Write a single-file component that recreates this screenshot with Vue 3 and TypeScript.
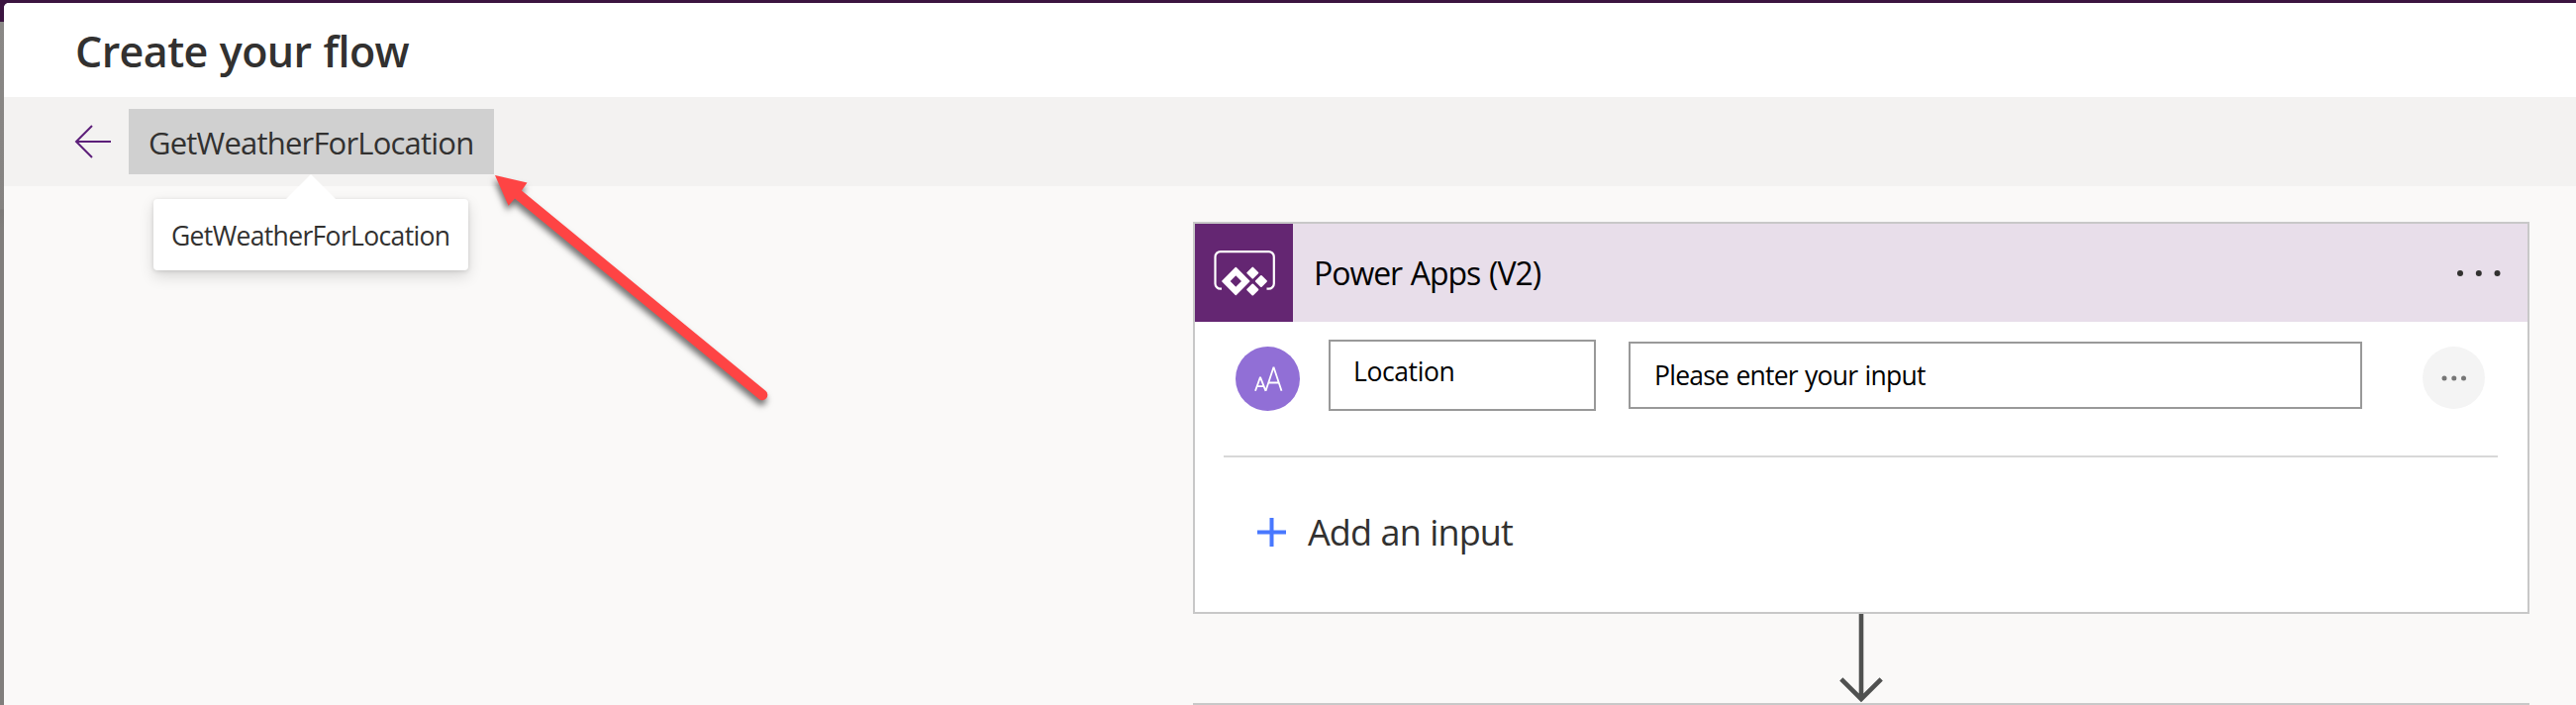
<script setup lang="ts">
const flowName = 'GetWeatherForLocation'
const headerDots = [3, 21.8, 40.5]
const rowDots = [3, 12.8, 22.5]
</script>

<template>
  <div class="backdrop">
    <main class="dialog">
      <header class="dialog-head"><h1>Create your flow</h1></header>
      <div class="toolbar">
        <svg class="back" width="38" height="36" viewBox="0 0 38 36">
          <path d="M37 18H2M18 2L2 18l16 16" fill="none" stroke="#5c1f7a" stroke-width="2" />
        </svg>
        <div class="name">
          <span class="name-text">{{ flowName }}</span>
          <div class="tooltip">
            <svg class="beak" width="52" height="26" viewBox="0 0 52 26"><path d="M0 26L26 0l26 26z" fill="#fff" /></svg>
            <span class="tip-text">{{ flowName }}</span>
          </div>
        </div>
      </div>
      <section class="canvas">
        <article class="card">
          <div class="card-head">
            <div class="app-icon">
              <svg width="99" height="99" viewBox="0 0 99 99">
                <path d="M27 65.7h-1.2a5.3 5.3 0 0 1-5.3-5.3V33.4a5.3 5.3 0 0 1 5.3-5.3h48.7a5.3 5.3 0 0 1 5.3 5.3v27a5.3 5.3 0 0 1-5.3 5.3h-2" fill="none" stroke="#fff" stroke-width="2.2" />
                <path d="M41.3 44.6L54.7 58 41.3 71.4 27.9 58zM41.3 51.3L34.6 58l6.7 6.7L48 58z" fill="#fff" fill-rule="evenodd" stroke="#fff" stroke-width="1.6" stroke-linejoin="round" />
                <path d="M58.3 44.6l5 5-5 5-5-5zM66.9 53l5 5-5 5-5-5zM58.3 61.5l5 5-5 5-5-5z" fill="#fff" stroke="#fff" stroke-width="2" stroke-linejoin="round" />
              </svg>
            </div>
            <h2>Power Apps (V2)</h2>
            <svg class="menu" width="44" height="6" viewBox="0 0 44 6">
              <circle v-for="x in headerDots" :key="x" :cx="x" cy="3" r="3" fill="#323130" />
            </svg>
          </div>
          <div class="row">
            <svg class="type" width="65" height="65" viewBox="0 0 65 65">
              <circle cx="32.5" cy="32.5" r="32.5" fill="#916fd6" />
              <path d="M20 44.8l5-14 5.5 14M21.7 40.2h6.8M30.5 44.8l8-24 8 24M33.5 36.5h10.3" fill="none" stroke="#fff" stroke-width="1.8" stroke-linejoin="bevel" />
            </svg>
            <div class="field field-name"><span>Location</span></div>
            <div class="field field-value"><span>Please enter your input</span></div>
            <div class="more">
              <svg width="26" height="6" viewBox="0 0 26 6">
                <circle v-for="x in rowDots" :key="x" :cx="x" cy="3" r="2.5" fill="#767676" />
              </svg>
            </div>
          </div>
          <div class="add">
            <svg width="29" height="29" viewBox="0 0 29 29"><path d="M0 14.5h29M14.5 0v29" stroke="#4878ff" stroke-width="4" /></svg>
            <span>Add an input</span>
          </div>
        </article>
        <svg class="connector" width="46" height="90" viewBox="0 0 46 90">
          <path d="M23 0v86M2.8 65.8L23 86l20.2-20.2" fill="none" stroke="#505150" stroke-width="4.6" />
        </svg>
        <article class="next-card"></article>
      </section>
    </main>
    <svg class="pointer" width="300" height="250" viewBox="0 0 300 250">
      <path d="M10 7L42.5 14.4l-5.6 8.2L283.4 224.8a5.3 5.3 0 0 1-6.8 8.2L30 30.6l-6.4 7.2z" fill="#fe4444" />
    </svg>
  </div>
</template>

<style>
body { margin: 0; overflow: hidden; }
</style>

<style scoped>
* { box-sizing: border-box; }
.backdrop {
  position: relative;
  width: 2602px;
  height: 712px;
  padding: 3px 0 0 4px;
  overflow: hidden;
  background: linear-gradient(#3b1440 22px, #8a8886 22px, #858381 211px, #7c7a78 212px, #807e7c 230px);
  font-family: "Open Sans", "Noto Sans", sans-serif;
  color: #323130;
}
.dialog {
  display: flex;
  flex-direction: column;
  height: 709px;
  overflow: hidden;
  border-top-left-radius: 5px;
  background: #faf9f8;
}
.dialog-head { height: 95px; padding-left: 72px; background: #fff; flex: none; }
h1, h2 { margin: 0; white-space: nowrap; }
h1 { font-size: 43px; line-height: 97px; font-weight: 600; letter-spacing: -0.6px; word-spacing: 1.5px; }
.toolbar {
  display: flex;
  flex: none;
  align-items: center;
  height: 90px;
  padding-left: 71px;
  background: #f3f2f1;
}
.back { margin-right: 17px; }
.name {
  position: relative;
  width: 369px;
  height: 66px;
  padding-left: 20px;
  background: #d0d0d0;
}
.name-text { font-size: 31px; line-height: 68px; letter-spacing: -0.8px; }
.tooltip {
  position: absolute;
  left: 25px;
  top: 91px;
  width: 318px;
  height: 72px;
  padding-left: 18px;
  border-radius: 4px;
  background: #fff;
  box-shadow: 0 6px 15px rgba(0, 0, 0, 0.14), 0 1px 4px rgba(0, 0, 0, 0.12);
}
.beak { position: absolute; left: 133px; top: -25px; }
.tip-text { font-size: 26.5px; line-height: 75px; letter-spacing: -0.65px; }
.canvas {
  display: flex;
  flex-direction: column;
  flex: none;
  width: 1350px;
  margin-left: 1201px;
  padding-top: 36px;
}
.card { height: 396px; border: 2px solid #c8c8c8; background: #fff; flex: none; }
.card-head { display: flex; align-items: center; height: 99px; background: #e8deea; color: #000; }
.app-icon { width: 99px; height: 99px; background: #642672; }
h2 { margin-left: 21px; font-size: 32px; font-weight: 400; line-height: 100px; letter-spacing: -1.05px; word-spacing: 1.5px; }
.menu { margin-left: auto; margin-right: 27px; }
.row {
  display: flex;
  align-items: flex-start;
  height: 137px;
  margin: 0 30px 0 29px;
  padding: 18px 13px 0 12px;
  border-bottom: 2px solid #d8d8d8;
}
.type { margin-top: 7px; }
.field { border: 2px solid #999; color: #000; white-space: nowrap; font-size: 26.5px; }
.field-name { width: 270px; height: 72px; margin-left: 29px; padding-left: 23px; line-height: 61px; letter-spacing: -0.4px; }
.field-value { width: 741px; height: 68px; margin: 2px 0 0 33px; padding-left: 24px; line-height: 64px; letter-spacing: -0.75px; word-spacing: 1px; }
.more {
  display: flex;
  align-items: center;
  justify-content: center;
  width: 63px;
  height: 63px;
  margin: 7px 0 0 auto;
  border-radius: 50%;
  background: #f4f4f4;
}
.add { display: flex; align-items: center; height: 150px; padding-left: 63px; }
.add span { margin-left: 22px; font-size: 36px; letter-spacing: -0.9px; word-spacing: 1px; white-space: nowrap; }
.connector { flex: none; margin-left: 651.5px; }
.next-card { flex: none; height: 60px; border: 2px solid #c8c8c8; background: #fff; }
.pointer { position: absolute; left: 490px; top: 170px; filter: drop-shadow(-1px 5px 3px rgba(0, 0, 0, 0.55)); }
</style>
